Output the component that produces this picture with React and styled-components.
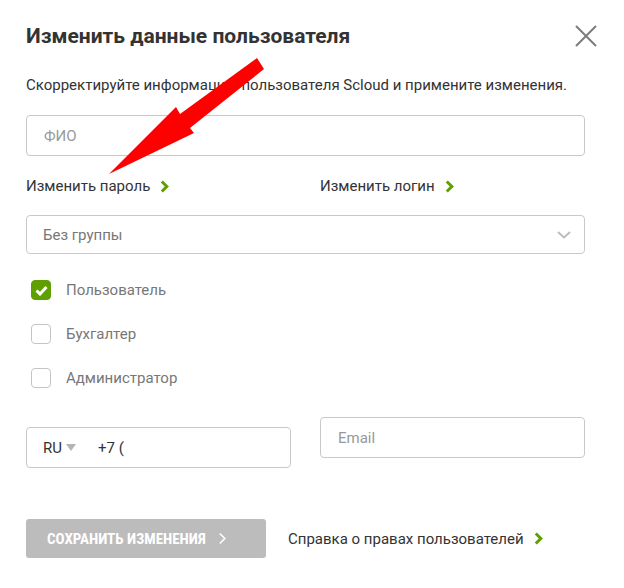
import React from "react";
import styled, { createGlobalStyle } from "styled-components";

const GREEN = "#5f9f00";

const Global = createGlobalStyle`
  html, body { margin: 0; background: #fff; }
  body { font-family: Roboto, "Noto Sans", sans-serif; color: #333; }
  * { box-sizing: border-box; }
`;

const Modal = styled.div`
  position: relative;
  width: 624px;
  height: 588px;
  padding: 24px 39px 0 26px;
  background: #fff;
`;

const Header = styled.div`
  display: flex;
  align-items: center;
  justify-content: space-between;
  height: 24px;
`;

const Title = styled.h1`
  margin: 0;
  font-size: 21px;
  line-height: 24px;
  font-weight: 700;
  color: #333;
`;

const CloseButton = styled.button`
  display: flex;
  width: 22px;
  height: 22px;
  margin-right: -12px;
  padding: 0;
  border: 0;
  background: none;
  cursor: pointer;
`;

const Lead = styled.p`
  margin: 27px 0 20px;
  font-size: 15px;
  line-height: 20px;
  color: #333;
`;

const Field = styled.div`
  display: flex;
  align-items: center;
  height: ${(p) => p.$h || 41}px;
  margin-top: ${(p) => p.$mt || 0}px;
  padding: 0 ${(p) => p.$pr || 16}px 0 ${(p) => p.$pl || 16}px;
  border: 1px solid #c9c9c9;
  border-radius: 4px;
  background: #fff;
  font-size: 15px;
  color: ${(p) => p.$color || "#999"};
`;

const Pair = styled.div`
  display: grid;
  grid-template-columns: 265px 265px;
  column-gap: 29px;
  align-items: start;
  margin-top: ${(p) => p.$mt || 0}px;
`;

const LinkItem = styled.a`
  display: flex;
  align-items: center;
  gap: 10px;
  height: 20px;
  font-size: 15px;
  line-height: 20px;
  color: #333;
  text-decoration: none;
`;

const SelectValue = styled.span`
  flex: 1;
`;

const Roles = styled.div`
  display: flex;
  flex-direction: column;
  gap: 24px;
  margin-top: 26px;
  padding-left: 5px;
`;

const Role = styled.label`
  display: flex;
  align-items: center;
  gap: 15px;
  height: 20px;
  font-size: 15px;
  color: #777;
`;

const Box = styled.span`
  display: flex;
  align-items: center;
  justify-content: center;
  width: 20px;
  height: 20px;
  border-radius: 4px;
  border: 1px solid ${(p) => (p.$checked ? GREEN : "#c4c4c4")};
  background: ${(p) => (p.$checked ? GREEN : "#fff")};
`;

const Country = styled.span`
  display: flex;
  align-items: center;
  gap: 4px;
  margin-right: 22px;
  color: #333;
`;

const Footer = styled.div`
  display: flex;
  align-items: center;
  gap: 22px;
  margin-top: 51px;
`;

const SaveButton = styled.button`
  display: flex;
  align-items: center;
  gap: 12px;
  width: 240px;
  height: 39px;
  padding: 0 0 0 21px;
  border: 0;
  border-radius: 3px;
  background: #bcbcbc;
  color: #fff;
  font-family: "Roboto Condensed", Roboto, sans-serif;
  font-size: 15px;
  font-weight: 700;
  text-transform: uppercase;
`;

const Pointer = styled.svg`
  position: absolute;
  left: 0;
  top: 0;
  pointer-events: none;
`;

const Chevron = ({ color = GREEN, w = 3 }) => (
  <svg width="9" height="13" viewBox="0 0 9 13">
    <path d="M1.8 1.5 L6.8 6.5 L1.8 11.5" fill="none" stroke={color} strokeWidth={w} />
  </svg>
);

const Check = () => (
  <svg width="13" height="11" viewBox="0 0 13 11">
    <path d="M1.5 5.5 L5 9 L11.5 2" fill="none" stroke="#fff" strokeWidth="3" />
  </svg>
);

export default function App() {
  return (
    <>
      <Global />
      <Modal>
        <Header>
          <Title>Изменить данные пользователя</Title>
          <CloseButton aria-label="Закрыть">
            <svg width="22" height="22" viewBox="0 0 22 22">
              <path d="M1 1 L21 21 M21 1 L1 21" stroke="#7d7d7d" strokeWidth="2" />
            </svg>
          </CloseButton>
        </Header>

        <Lead>Скорректируйте информацию пользователя Scloud и примените изменения.</Lead>

        <Field $pl={17}>ФИО</Field>

        <Pair $mt={20}>
          <LinkItem href="#">
            Изменить пароль <Chevron />
          </LinkItem>
          <LinkItem href="#">
            Изменить логин <Chevron />
          </LinkItem>
        </Pair>

        <Field $mt={19} $h={39} $color="#777" $pr={13}>
          <SelectValue>Без группы</SelectValue>
          <svg width="14" height="8" viewBox="0 0 14 8">
            <path d="M1 1 L7 6.5 L13 1" fill="none" stroke="#bdbdbd" strokeWidth="2" />
          </svg>
        </Field>

        <Roles>
          <Role>
            <Box $checked>
              <Check />
            </Box>
            Пользователь
          </Role>
          <Role>
            <Box />
            Бухгалтер
          </Role>
          <Role>
            <Box />
            Администратор
          </Role>
        </Roles>

        <Pair $mt={29}>
          <Field $mt={10} $color="#333">
            <Country>
              RU
              <svg width="10" height="8" viewBox="0 0 10 8">
                <path d="M0 0 H10 L5 7 Z" fill="#b5b5b5" />
              </svg>
            </Country>
            +7 (
          </Field>
          <Field $pl={17}>Email</Field>
        </Pair>

        <Footer>
          <SaveButton>
            Сохранить изменения
            <Chevron color="#fff" w={1.6} />
          </SaveButton>
          <LinkItem href="#">
            Справка о правах пользователей <Chevron />
          </LinkItem>
        </Footer>

        <Pointer width="624" height="588" viewBox="0 0 624 588">
          <polygon
            points="257,58 264,69 190,128 194,133 109,174 176,107 180,114"
            fill="#ff0000"
          />
        </Pointer>
      </Modal>
    </>
  );
}
